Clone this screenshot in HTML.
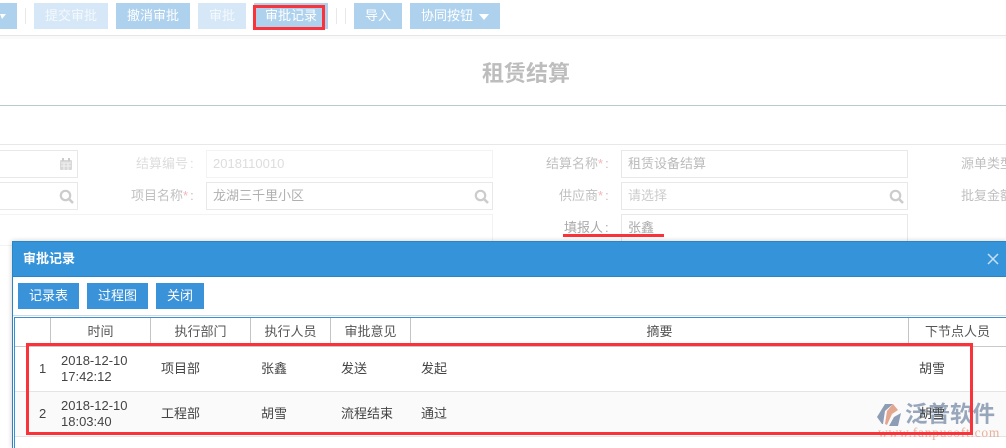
<!DOCTYPE html>
<html style="overflow:hidden;height:448px"><head><meta charset="utf-8">
<style>
html,body{margin:0;padding:0}
body{width:1006px;height:448px;position:relative;overflow:hidden;background:#fff;font-family:"Liberation Sans","Noto Sans CJK SC",sans-serif;font-size:13px;color:#333}
#w{position:absolute;left:0;top:0;width:1006px;height:448px;overflow:hidden}
.a{position:absolute;white-space:nowrap}
.b{position:absolute;top:3px;height:26px;line-height:26px;text-align:center;color:#fff;background:#aed2ee}
.l{background:#d6e8f7;color:#f4f9fd}
.s{position:absolute;top:8px;width:1px;height:16px;background:#e8e8e8}
.i{position:absolute;box-sizing:border-box;border:1px solid #e8e8e8;height:28px;line-height:26px;padding-left:6px;color:#bbb;background:#fff;white-space:nowrap}
.f{border-color:#f3f3f3;color:#ddd}
.t{position:absolute;height:28px;line-height:28px;color:#c0c0c0;white-space:nowrap}
.t.f2{color:#ddd}
.t i{font-style:normal;color:#f5b5b5}
.t b{font-weight:normal;margin-left:2px}
.h{position:absolute;top:318px;height:27px;line-height:28px;text-align:center;color:#555}
.v{position:absolute;top:318px;width:1px;height:28px;background:#c4c4c4}
.d{position:absolute;line-height:16px;color:#444;white-space:nowrap}
.m{position:absolute;top:283px;height:26px;line-height:26px;background:#3a92d8;color:#fff;text-align:center}
</style></head><body><div id="w">
<div class="b" style="left:0;width:17px"><svg width="17" height="26" style="display:block"><path d="M0 11h6l-4 5z" fill="#fff"/></svg></div>
<div class="s" style="left:25px"></div>
<div class="b l" style="left:34px;width:74px">提交审批</div>
<div class="b" style="left:116px;width:74px">撤消审批</div>
<div class="b l" style="left:198px;width:48px">审批</div>
<div class="b" style="left:254px;width:74px">审批记录</div>
<div class="a" style="left:253px;top:5px;width:66px;height:19px;border:3px solid #f93339"></div>
<div class="s" style="left:336px"></div><div class="s" style="left:345px"></div>
<div class="b" style="left:354px;width:48px">导入</div>
<div class="b" style="left:410px;width:90px;text-align:left;text-indent:11px">协同按钮<svg width="12" height="8" style="position:absolute;left:68px;top:10px"><path d="M1 1h10l-5 6z" fill="#fff"/></svg></div>
<div class="a" style="left:0;top:35px;width:1006px;height:1px;background:#e6e6e6"></div>
<div class="a" style="left:0;top:36px;width:1006px;height:3px;background:#fafafa"></div>
<div class="a" style="left:482px;top:60px;font-size:22px;line-height:28px;font-weight:bold;color:#bdbdbd">租赁结算</div>
<div class="a" style="left:0;top:105px;width:1006px;height:1px;background:#b8c9d0"></div>
<div class="a" style="left:0;top:144px;width:1006px;height:1px;background:#e8e8e8"></div>

<div class="i" style="left:-5px;top:150px;width:83px"></div>
<svg class="a" style="left:60px;top:158px" width="13" height="13"><rect x="0" y="2" width="12" height="10" rx="1" fill="#d8d8d8"/><path d="M3 0v3M9 0v3" stroke="#ccc" stroke-width="2"/><path d="M1 5h10M1 8h10M4 5v7M8 5v7" stroke="#f2f2f2"/></svg>
<div class="t f2" style="left:136px;top:150px">结算编号<b>:</b></div>
<div class="i f" style="left:206px;top:150px;width:287px">2018110010</div>
<div class="t" style="left:546px;top:150px">结算名称<i>*</i><b>:</b></div>
<div class="i" style="left:621px;top:150px;width:287px">租赁设备结算</div>
<div class="t" style="left:961px;top:150px">源单类型</div>

<div class="i" style="left:-5px;top:182px;width:83px"></div>
<svg class="a" style="left:59px;top:189px" width="15" height="15"><circle cx="6.5" cy="6.5" r="4.7" fill="none" stroke="#ccc" stroke-width="2.2"/><path d="M10 10l4 4" stroke="#ccc" stroke-width="2.6"/></svg>
<div class="t" style="left:131px;top:182px">项目名称<i>*</i><b>:</b></div>
<div class="i" style="left:206px;top:182px;width:287px;color:#b0b0b0">龙湖三千里小区</div>
<svg class="a" style="left:474px;top:189px" width="15" height="15"><circle cx="6.5" cy="6.5" r="4.7" fill="none" stroke="#ccc" stroke-width="2.2"/><path d="M10 10l4 4" stroke="#ccc" stroke-width="2.6"/></svg>
<div class="t" style="left:559px;top:182px">供应商<i>*</i><b>:</b></div>
<div class="i" style="left:621px;top:182px;width:287px;color:#ccc">请选择</div>
<svg class="a" style="left:889px;top:189px" width="15" height="15"><circle cx="6.5" cy="6.5" r="4.7" fill="none" stroke="#ccc" stroke-width="2.2"/><path d="M10 10l4 4" stroke="#ccc" stroke-width="2.6"/></svg>
<div class="t" style="left:961px;top:182px">批复金额</div>

<div class="a" style="left:-5px;top:214px;width:496px;height:30px;border:1px solid #f3f3f3"></div>
<div class="t" style="left:564px;top:214px;color:#aaa">填报人<b>:</b></div>
<div class="i" style="left:621px;top:214px;width:287px;height:34px;color:#aaa">张鑫</div>
<div class="a" style="left:563px;top:234px;width:101px;height:3px;background:#f93339"></div>

<div class="a" style="left:12px;top:241px;width:994px;height:207px;background:#fff;border-left:1px solid #2b84c6;box-shadow:0 0 5px rgba(0,0,0,.2)"></div>
<div class="a" style="left:13px;top:241px;width:993px;height:34px;background:#3593da;border-top:1px solid #2b84c6;border-bottom:1px solid #2b84c6;color:#fff;font-weight:bold;line-height:34px;text-indent:10px">审批记录</div>
<svg class="a" style="left:987px;top:253px" width="12" height="12"><path d="M1 1l10 10M11 1L1 11" stroke="#c5dff3" stroke-width="1.5"/></svg>
<div class="m" style="left:18px;width:61px">记录表</div>
<div class="m" style="left:87px;width:61px">过程图</div>
<div class="m" style="left:156px;width:48px">关闭</div>

<div class="a" style="left:13px;top:315px;width:993px;height:1px;background:#cfd8de"></div>
<div class="a" style="left:14px;top:317px;width:992px;height:1px;background:#3a8fd0"></div>
<div class="a" style="left:14px;top:317px;width:1px;height:131px;background:#3a8fd0"></div>
<div class="v" style="left:50px"></div><div class="v" style="left:150px"></div><div class="v" style="left:250px"></div><div class="v" style="left:330px"></div><div class="v" style="left:410px"></div><div class="v" style="left:908px"></div>
<div class="h" style="left:51px;width:99px">时间</div>
<div class="h" style="left:151px;width:99px">执行部门</div>
<div class="h" style="left:251px;width:79px">执行人员</div>
<div class="h" style="left:331px;width:79px">审批意见</div>
<div class="h" style="left:411px;width:497px">摘要</div>
<div class="h" style="left:909px;width:97px">下节点人员</div>
<div class="a" style="left:15px;top:346px;width:991px;height:1px;background:#c8c8c8"></div>
<div class="a" style="left:15px;top:392px;width:991px;height:44px;background:#fafafa"></div>
<div class="a" style="left:15px;top:391px;width:991px;height:1px;background:#e4e4e4"></div>
<div class="a" style="left:15px;top:436px;width:991px;height:1px;background:#e4e4e4"></div>

<!-- watermark logo -->
<svg class="a" style="left:870px;top:398px" width="40" height="40"><path d="M7 19L15 6h8l-8 7-2 13h-1z" fill="#8d9db5"/><path d="M15 26l2-13 6-7 5 6-6 4-5 11z" fill="#e3a68e"/><path d="M19 28l5-9 7-4-3 13z" fill="#8d9db5"/></svg>
<div class="a" style="left:905px;top:401px;font-size:22.5px;line-height:28px;font-weight:bold;color:#98a6bb">泛普软件</div>
<div class="a" style="left:878px;top:426px;font-family:'Liberation Serif',serif;font-size:13.5px;line-height:14px;color:#e8b09a;letter-spacing:.75px">www.fanpusoft.com</div>

<div class="d" style="left:39px;top:361px">1</div>
<div class="d" style="left:61px;top:353px">2018-12-10<br>17:42:12</div>
<div class="d" style="left:161px;top:361px">项目部</div>
<div class="d" style="left:261px;top:361px">张鑫</div>
<div class="d" style="left:341px;top:361px">发送</div>
<div class="d" style="left:421px;top:361px">发起</div>
<div class="d" style="left:919px;top:361px">胡雪</div>
<div class="d" style="left:39px;top:406px">2</div>
<div class="d" style="left:61px;top:398px">2018-12-10<br>18:03:40</div>
<div class="d" style="left:161px;top:406px">工程部</div>
<div class="d" style="left:261px;top:406px">胡雪</div>
<div class="d" style="left:341px;top:406px">流程结束</div>
<div class="d" style="left:421px;top:406px">通过</div>
<div class="d" style="left:919px;top:406px">胡雪</div>

<div class="a" style="left:26px;top:343px;width:941px;height:86px;border:3px solid #f93339"></div>
</div></body></html>
